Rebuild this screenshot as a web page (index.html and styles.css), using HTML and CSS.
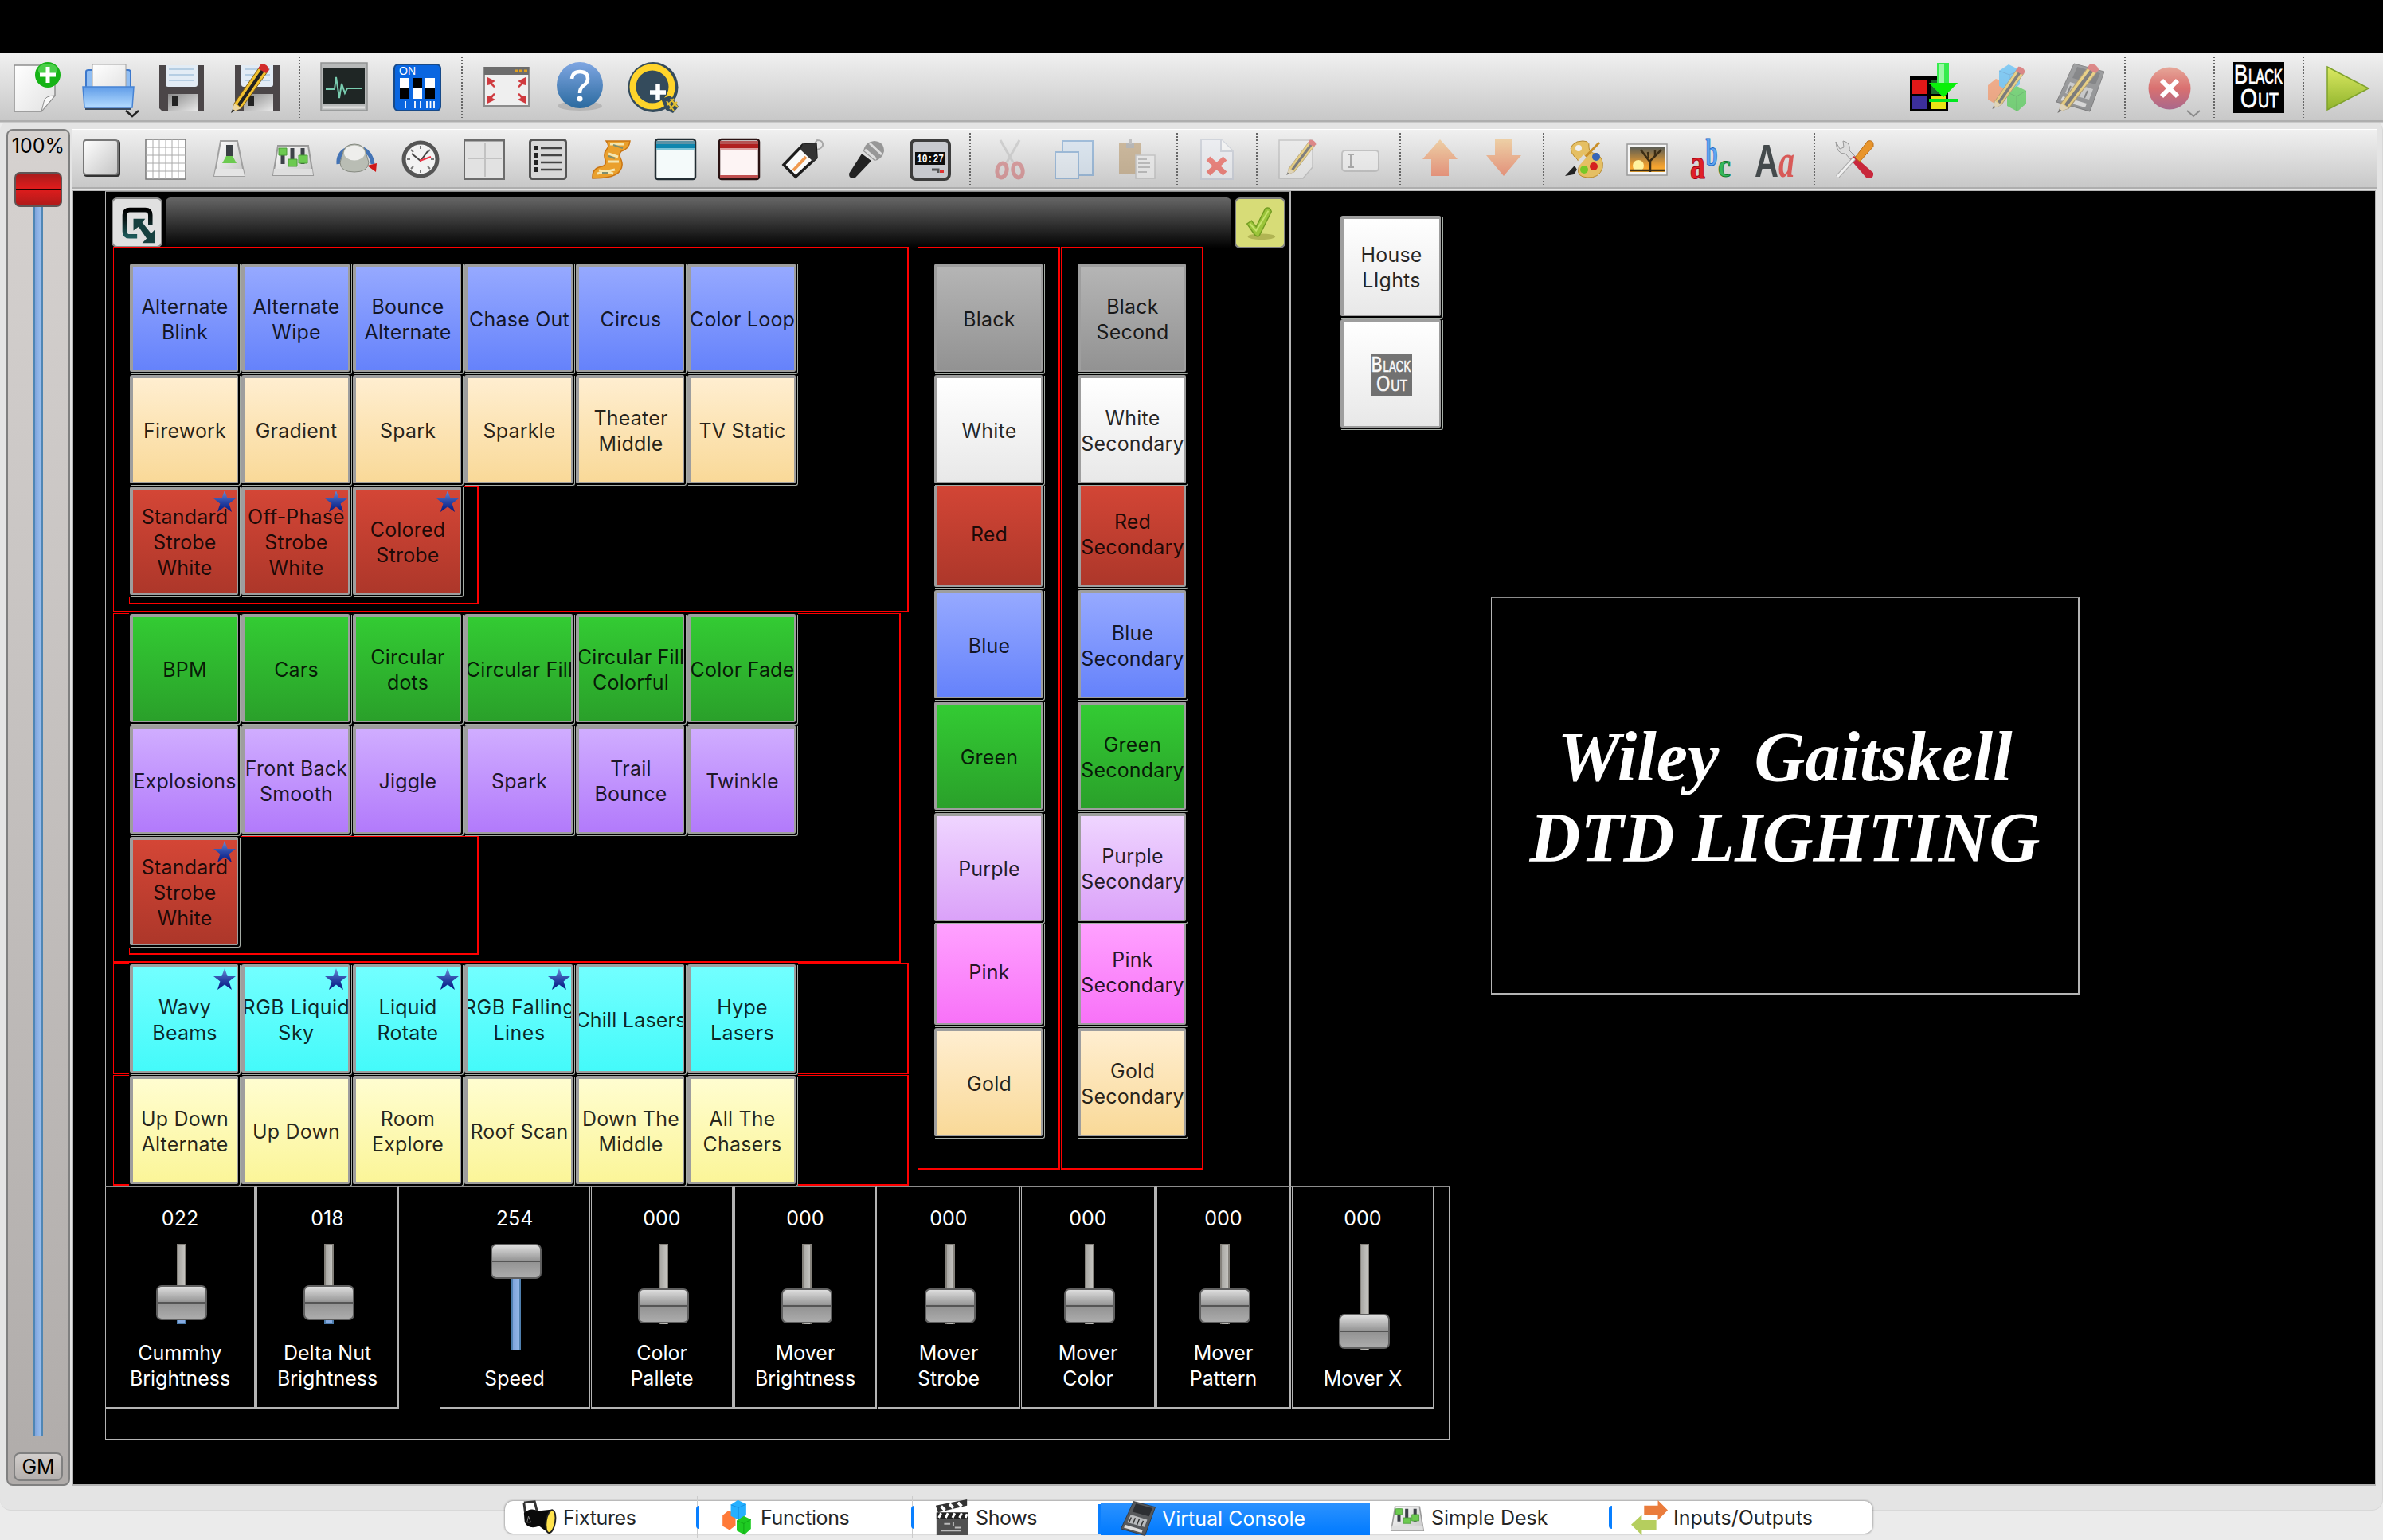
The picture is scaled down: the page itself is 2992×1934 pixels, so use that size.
FILE: index.html
```html
<!DOCTYPE html>
<html lang="en">
<head>
<meta charset="utf-8">
<title>Virtual Console</title>
<link rel="stylesheet" href="styles.css">
</head>
<body>
<svg class="defs" width="0" height="0" aria-hidden="true">
  <defs>
    <linearGradient id="gPaper" x1="0" y1="0" x2="1" y2="1"><stop offset="0" stop-color="#fff"/><stop offset="1" stop-color="#e2e2e2"/></linearGradient>
    <linearGradient id="gBlue" x1="0" y1="0" x2="0" y2="1"><stop offset="0" stop-color="#5f9ce8"/><stop offset="1" stop-color="#b5dcff"/></linearGradient>
    <linearGradient id="gHelp" x1="0" y1="0" x2="0" y2="1"><stop offset="0" stop-color="#7fa6e2"/><stop offset="1" stop-color="#2a6a9f"/></linearGradient>
    <linearGradient id="gMetal" x1="0" y1="0" x2="1" y2="1"><stop offset="0" stop-color="#8a8a8a"/><stop offset="1" stop-color="#e8e8e8"/></linearGradient>
    <linearGradient id="gPlate" x1="0" y1="0" x2="1" y2="1"><stop offset="0" stop-color="#fff"/><stop offset="1" stop-color="#c4c4c4"/></linearGradient>
    <linearGradient id="gPlay" x1="0" y1="0" x2="0" y2="1"><stop offset="0" stop-color="#dbe962"/><stop offset="1" stop-color="#8fb32c"/></linearGradient>
    <linearGradient id="gStop" x1="0" y1="0" x2="0" y2="1"><stop offset="0" stop-color="#e6a698"/><stop offset=".5" stop-color="#d97070"/><stop offset="1" stop-color="#a8688c"/></linearGradient>
    <linearGradient id="gArrow" x1="0" y1="0" x2="0" y2="1"><stop offset="0" stop-color="#edcfa5"/><stop offset="1" stop-color="#e2917a"/></linearGradient>
    <linearGradient id="gStar" x1="0" y1="0" x2="0" y2="1"><stop offset="0" stop-color="#6d8fd6"/><stop offset=".5" stop-color="#2c48a8"/><stop offset="1" stop-color="#001780"/></linearGradient>
    <linearGradient id="gSun" x1="0" y1="0" x2="0" y2="1"><stop offset="0" stop-color="#555a55"/><stop offset=".75" stop-color="#f0a030"/><stop offset="1" stop-color="#ffb030"/></linearGradient>
    <linearGradient id="gTeal" x1="0" y1="0" x2="0" y2="1"><stop offset="0" stop-color="#000"/><stop offset=".4" stop-color="#0a1a1a"/><stop offset="1" stop-color="#1e5a5a"/></linearGradient>
    <g id="pencil">
      <path d="M8 52 40 6 50 12 17 58 6 62Z" fill="#f2c12e" stroke="#806018" stroke-width="1"/>
      <path d="M12 53 43 8 47 10 15 56Z" fill="#222"/>
      <path d="M38 8 42 2Q50 2 52 10L48 14Z" fill="#d22b2b"/>
      <path d="M8 52 17 58 5 63Z" fill="#ecd6a0"/><path d="M6 59 9 61 4 64Z" fill="#222"/>
    </g>
    <g id="floppy">
      <path d="M4 4H60V62H8L4 58Z" fill="#4b4648"/>
      <path d="M12 4H52V28Q52 31 49 31H15Q12 31 12 28Z" fill="#e3ecf5"/>
      <path d="M16 9H48M16 16H48M16 23H48" stroke="#a8c3dd" stroke-width="1.6"/>
      <path d="M15 40H52V61H15Z" fill="url(#gMetal)"/><path d="M20 43H28V55H20Z" fill="#222"/>
    </g>
    <g id="cubes">
      <path d="M2 27 12 19 24 24V44L14 52 2 45Z" fill="#ff7a38"/>
      <path d="M16 9 28 1 42 8V26L30 35 16 28Z" fill="#25b0ff"/><path d="M16 9 29 14 42 8M29 14V34" stroke="#1585d6" fill="none"/>
      <path d="M26 36 38 28 50 34V50L39 60 26 53Z" fill="#1ecb22"/><path d="M26 36 38 41 50 34M38 41V59" stroke="#0c9a12" fill="none"/>
    </g>
    <g id="desk">
      <path d="M24 2 62 12 44 62 2 50Z" fill="#57595c" stroke="#2c2c2e"/>
      <path d="M28 6 57 14 51 28 22 20Z" fill="#2d2f33"/>
      <path d="M19 25 48 34 43 47 13 39Z" fill="#b9bbbd"/>
      <path d="M20 30 16 39M27 31 23 41M34 33 30 43M41 36 37 45" stroke="#333" stroke-width="2"/>
      <path d="M10 43 40 52 38 57 7 48Z" fill="#dcdcdc"/>
    </g>
    <g id="faders">
      <path d="M7 9H45L51 46H1Z" fill="url(#gPlate)" stroke="#9a9a9a" stroke-width="2"/>
      <path d="M2 38H50L51 46H1Z" fill="#dedede"/>
      <path d="M13 12V32M25 12V32M38 12V32" stroke="#3d4248" stroke-width="5"/>
      <path d="M8 12H18V21H8ZM20 26H31V35H20ZM33 21H44V31H33Z" fill="#6cca50" stroke="#4a9c38"/>
    </g>
    <symbol id="star" viewBox="0 0 28 28"><path d="M14 0 17.6 10H28L19.6 16.4 23 27 14 20.6 5 27 8.4 16.4 0 10H10.4Z" fill="url(#gStar)"/></symbol>
    <symbol id="blackout" viewBox="0 0 64 64">
      <path d="M0 0H64V64H0Z" fill="#000"/>
      <g fill="#fff" stroke="#fff" stroke-width=".8" font-family="Liberation Sans, sans-serif"><text x="1" y="27" font-size="34" textLength="17" lengthAdjust="spacingAndGlyphs">B</text><text x="19" y="27" font-size="25" textLength="43" lengthAdjust="spacingAndGlyphs">LACK</text>
      <text x="9" y="57" font-size="34" textLength="21" lengthAdjust="spacingAndGlyphs">O</text><text x="31" y="57" font-size="25" textLength="26" lengthAdjust="spacingAndGlyphs">UT</text></g>
    </symbol>
  </defs>
</svg>

<div class="app">
  <div class="menubar-strip"></div>

  <header class="toolbar toolbar-main">
    <span class="tool"><svg viewBox="0 0 64 64"><path d="M6 4H57V42L40 62H6Z" fill="url(#gPaper)" stroke="#8e8e8e" stroke-width="1.5"/><path d="M57 42Q44 42 43 50L40 62Z" fill="#f8f8f8" stroke="#8e8e8e"/><circle cx="48" cy="16" r="16" fill="#16b316"/><ellipse cx="48" cy="10" rx="12" ry="8" fill="#6ee06a" opacity=".6"/><path d="M48 6V26M38 16H58" stroke="#fff" stroke-width="5"/></svg></span>
    <span class="tool"><svg viewBox="0 0 64 64"><path d="M4 12Q4 10 7 10H57Q60 10 60 13V34H4Z" fill="#8fbdf2" stroke="#3c78cc" stroke-width="2"/><path d="M12 3H54V34H12Z" fill="url(#gPaper)" stroke="#a0a0a0"/><path d="M0 31H64L62 57H2Z" fill="url(#gBlue)" stroke="#4683d4" stroke-width="1.5"/><path d="M3 59H61" stroke="#3c4c60" stroke-width="2"/><path d="M54 61 62 68 70 61" stroke="#222" stroke-width="2.5" fill="none"/></svg></span>
    <span class="tool"><svg viewBox="0 0 64 64"><use href="#floppy"/></svg></span>
    <span class="tool"><svg viewBox="0 0 64 64"><use href="#floppy" x="3"/><use href="#pencil" x="-2"/></svg></span>
    <i class="sep"></i>
    <span class="tool"><svg viewBox="0 0 64 64"><path d="M3 1H61V61H3Z" fill="#b7b9b9" stroke="#929494" stroke-width="1.5"/><path d="M6 7H58V53H6Z" fill="#1f2625"/><path d="M9 34H20L22 19 26 45 29 27 33 39 36 33H55" stroke="#79cdb0" stroke-width="2" fill="none"/><path d="M6 57H58" stroke="#ddd" stroke-width="3"/></svg></span>
    <span class="tool"><svg viewBox="0 0 64 64"><rect x="3" y="3" width="58" height="58" rx="5" fill="#0a66e0" stroke="#184a88" stroke-width="2"/><text x="9" y="16" font-size="14" textLength="21" lengthAdjust="spacingAndGlyphs" fill="#fff" font-family="Liberation Sans, sans-serif">ON</text><path d="M10 20H22V32H10ZM42 20H54V32H42ZM26 33H38V46H26Z" fill="#fff"/><path d="M26 20H38V33H26ZM10 32H22V46H10ZM42 32H54V46H42Z" fill="#000"/><path d="M17 49V58M29 49V58M36 49V58M44 49V58M48.500 49V58M53 49V58" stroke="#fff" stroke-width="1.8"/></svg></span>
    <i class="sep"></i>
    <span class="tool"><svg viewBox="0 0 64 64"><path d="M4 7H60V55H4Z" fill="#efefef" stroke="#8c8c8c" stroke-width="2"/><path d="M4 6H60V16H4Z" fill="#6c6c6c"/><path d="M42 11H46M48 11H52M54 11H58" stroke="#e0a020" stroke-width="3"/><g fill="#cf3a3f"><path d="M8 19 18 24 14 26 18 31 16 32 12 28 8 29Z"/><path d="M56 19 46 24 50 26 46 31 48 32 52 28 56 29Z"/><path d="M8 52 18 47 14 45 18 40 16 39 12 43 8 42Z"/><path d="M56 52 46 47 50 45 46 40 48 39 52 43 56 42Z"/></g></svg></span>
    <span class="tool"><svg viewBox="0 0 64 64"><ellipse cx="32" cy="55" rx="28" ry="6" fill="#000" opacity=".12"/><circle cx="32" cy="29" r="29" fill="url(#gHelp)"/><path d="M22 21Q23 12 32 12 42 12 42 21 42 26 36 30 32 33 32 39" stroke="#fff" stroke-width="4.500" fill="none"/><circle cx="32" cy="46" r="3.500" fill="#fff"/></svg></span>
    <span class="tool"><svg viewBox="0 0 64 64"><circle cx="32" cy="31.500" r="31.500" fill="#344b5c"/><circle cx="31" cy="31" r="24.500" fill="none" stroke="#ffd42a" stroke-width="8"/><path d="M38 27V48M28 38H48" stroke="#fff" stroke-width="5.500"/><path d="M42 46 54 42 64 56 57 64 48 60Z" fill="#344b5c"/><path d="M50 54 58 46M53 59 62 50M49 49 58 61M54 46 63 57" stroke="#e0bd35" stroke-width="2"/></svg></span>

    <div class="toolbar-right">
      <span class="tool"><svg viewBox="0 0 64 64"><path d="M2 18H50V62H2Z" fill="#000"/><path d="M5 22H24V40H5Z" fill="#e01818"/><path d="M28 22H47V40H28Z" fill="#1f6a2c"/><path d="M5 43H24V59H5Z" fill="#3c2f9c"/><path d="M28 43H47V59H28Z" fill="#e8e415"/><path d="M36 1H51V26H62L44 44 26 26H36Z" fill="#35ec4d"/><path d="M38 3H45V26H38Z" fill="#9cf7a5"/><path d="M26 26H62L44 44Z" fill="#09f009"/><path d="M26 46H63V50H26Z" fill="#00e820"/></svg></span>
      <span class="tool off"><svg viewBox="0 0 64 64"><use href="#cubes" x="6" y="2"/><g transform="translate(10 4) scale(.86)"><use href="#pencil"/></g></svg></span>
      <span class="tool off"><svg viewBox="0 0 64 64"><use href="#desk"/><g transform="translate(-1 0) scale(1.08 1)"><use href="#pencil"/></g></svg></span>
      <i class="sep"></i>
      <span class="tool"><svg viewBox="0 0 64 64"><circle cx="32" cy="33" r="26.500" fill="url(#gStop)"/><path d="M22 23 42 43M42 23 22 43" stroke="#fff" stroke-width="6"/><path d="M54 61 62 68 70 61" stroke="#8a8a8a" stroke-width="2" fill="none"/></svg></span>
      <i class="sep"></i>
      <span class="tool"><svg><use href="#blackout"/></svg></span>
      <i class="sep"></i>
      <span class="tool"><svg viewBox="0 0 64 64"><path d="M6 6 58 33 6 60Z" fill="url(#gPlay)" stroke="#7fa22c" stroke-width="1.5"/></svg></span>
    </div>
  </header>

  <main class="pane">
    <aside class="grand-master">
      <span class="gm-value">100%</span>
      <div class="gm-track"><i class="gm-handle"></i></div>
      <span class="gm-button">GM</span>
    </aside>

    <section class="workspace">
      <nav class="toolbar toolbar-widgets">
        <span class="tool"><svg viewBox="0 0 52 52"><rect x="3" y="2" width="46" height="46" rx="4" fill="#333"/><rect x="3" y="2" width="43" height="43" rx="3" fill="url(#gPlate)" stroke="#777" stroke-width="2"/></svg></span>
        <span class="tool"><svg viewBox="0 0 52 52"><path d="M1 1H51V51H1Z" fill="#fff" stroke="#777" stroke-width="1.5"/><path d="M10 1V51M18 1V51M26 1V51M34 1V51M42 1V51M1 11H51M1 21H51M1 31H51M1 41H51" stroke="#aaa"/></svg></span>
        <span class="tool"><svg viewBox="0 0 52 52"><path d="M15 3H36L45 47H7Z" fill="url(#gPlate)" stroke="#a0a0a0" stroke-width="2"/><path d="M9 38H43L45 47H7Z" fill="#e4e4e4"/><path d="M26 8V28" stroke="#3a3f44" stroke-width="8"/><path d="M22 22H30L35 31H17Z" fill="#6cca50"/></svg></span>
        <span class="tool"><svg viewBox="0 0 52 52"><use href="#faders"/></svg></span>
        <span class="tool"><svg viewBox="0 0 52 52"><path d="M3 32Q2 20 12 14M34 13Q44 18 46 32" stroke="#4373b5" stroke-width="5" fill="none"/><path d="M39 34 51 31 50 42Z" fill="#d01818"/><path d="M8 20Q10 7 23 7 36 7 38 20L41 30Q40 42 23 42 5 42 5 30Z" fill="#b9bdb4" stroke="#858980"/><ellipse cx="23" cy="18" rx="13" ry="9.500" fill="#eeeeec"/></svg></span>
        <span class="tool"><svg viewBox="0 0 52 52"><circle cx="26" cy="26" r="21" fill="#f2f2f2" stroke="#555" stroke-width="5"/><path d="M26 9V13M26 39V43M9 26H13M39 26H43M14 14 17 17M38 14 35 17M14 38 17 35M38 38 35 35" stroke="#777" stroke-width="2"/><path d="M15 19 26 28 35 16" stroke="#444" stroke-width="2" fill="none"/><path d="M25 28 39 23" stroke="#e34" stroke-width="2"/></svg></span>
        <span class="tool"><svg viewBox="0 0 52 52"><path d="M1 1H51V51H1Z" fill="#e2e2e2" stroke="#6c6c6c" stroke-width="2"/><path d="M1 2H51" stroke="#6c6c6c" stroke-width="3"/><path d="M27 5V48M5 25H48" stroke="#c2c2c2" stroke-width="2"/></svg></span>
        <span class="tool"><svg viewBox="0 0 52 52"><rect x="3.500" y="1.500" width="45" height="49" rx="3" fill="#d8d8d8" stroke="#555" stroke-width="3"/><path d="M9 12H14M9 21H14M9 30H14M9 39H14" stroke="#222" stroke-width="6"/><path d="M17 12H43M17 21H43M17 30H43M17 39H43" stroke="#444" stroke-width="2.500"/></svg></span>
        <span class="tool"><svg viewBox="0 0 52 52"><path d="M19 3H49Q48 13 38 16 34 20 38 27 41 35 36 41 30 50 2 50 1 37 14 35 20 33 18 27 15 19 20 13 24 9 19 3Z" fill="#eaa02c" stroke="#c97412" stroke-width="1.500"/><path d="M24 7H42M22 19 34 23M22 29H35M8 44 30 39M10 40 28 44" stroke="#f4e6b0" stroke-width="3"/><path d="M28 8 40 12M22 22 30 25M14 43H22" stroke="#7c8f70" stroke-width="2"/></svg></span>
        <span class="tool"><svg viewBox="0 0 52 52"><rect x="1" y="1" width="50" height="50" rx="3" fill="#f4fafa" stroke="#222d33" stroke-width="2.500"/><path d="M2 3H50V8H2Z" fill="#5c93a6"/><path d="M2 7H50V12H2Z" fill="#0f86ae"/><path d="M2 12H50V14H2Z" fill="#7cc3d6"/></svg></span>
        <span class="tool"><svg viewBox="0 0 52 52"><rect x="1" y="1" width="50" height="50" rx="3" fill="#fdf4f4" stroke="#2a1212" stroke-width="2.500"/><path d="M2 3H50V8H2Z" fill="#b55454"/><path d="M2 7H50V12H2Z" fill="#b02020"/><path d="M2 12H50V15H2Z" fill="#dca0a0"/><path d="M2 46H50V50H2Z" fill="#c05050"/></svg></span>
        <span class="tool"><svg viewBox="0 0 52 52"><path d="M38 10 44 2Q52 2 51 9 48 14 42 14" fill="none" stroke="#aaa" stroke-width="2"/><path d="M26 8 42 7 43 24 17 48 2 33Z" fill="#fafafa" stroke="#1c1c1c" stroke-width="3.500"/><path d="M26 7 42 6 44 24 39 29 23 14Z" fill="#333"/><path d="M30 23 14 40" stroke="#f09a50" stroke-width="4"/></svg></span>
        <span class="tool"><svg viewBox="0 0 52 52"><path d="M20 19 32 28 12 49Q4 52 4 44Z" fill="#222"/><path d="M22 16Q24 4 36 3 48 4 48 16 46 26 36 28Z" fill="#979797"/><path d="M30 6 45 20M24 14 38 26" stroke="#ddd" stroke-width="3"/></svg></span>
        <span class="tool"><svg viewBox="0 0 52 52"><rect x="2" y="2" width="48" height="49" rx="6" fill="#c7c9ce" stroke="#3d3d3d" stroke-width="4"/><path d="M7 17H45V33H7Z" fill="#0c0c0c"/><text x="9" y="30" font-size="14" textLength="34" lengthAdjust="spacingAndGlyphs" font-weight="bold" fill="#fff" font-family="Liberation Mono, monospace">10:27</text><path d="M28 39H36V43" stroke="#555" stroke-width="3" fill="none"/><path d="M38 39H43V43H38Z" fill="#d33"/></svg></span>
        <i class="sep"></i>
        <span class="tool off"><svg viewBox="0 0 52 52"><path d="M14 2 30 30M38 2 22 30" stroke="#b8b8b8" stroke-width="3"/><ellipse cx="16" cy="40" rx="6" ry="9" transform="rotate(12 16 40)" fill="none" stroke="#cc5b5e" stroke-width="5"/><ellipse cx="36" cy="40" rx="6" ry="9" transform="rotate(-12 36 40)" fill="none" stroke="#cc5b5e" stroke-width="5"/></svg></span>
        <span class="tool off"><svg viewBox="0 0 52 52"><path d="M12 3H50V46H12Z" fill="#cfe2f5" stroke="#5a92cc" stroke-width="2"/><path d="M3 17H32V50H3Z" fill="#e0ecf8" stroke="#5a92cc" stroke-width="2"/></svg></span>
        <span class="tool off"><svg viewBox="0 0 52 52"><path d="M3 6H31V44H3Z" fill="#b08a55"/><path d="M12 5H22V12H12Z" fill="#888"/><path d="M17 1V7" stroke="#999" stroke-width="4"/><path d="M24 21H48V50H24Z" fill="#eee" stroke="#aaa" stroke-width="1.500"/><path d="M27 26H38M27 31H42M27 36H42M27 42H38" stroke="#999" stroke-width="2"/></svg></span>
        <i class="sep"></i>
        <span class="tool off"><svg viewBox="0 0 52 52"><path d="M6 1H31L46 16V51H6Z" fill="#f0f3fa" stroke="#b9c0cf" stroke-width="2"/><path d="M31 1V16H46" fill="#fff" stroke="#b9c0cf" stroke-width="2"/><path d="M15 25 36 44M36 25 15 44" stroke="#f22c20" stroke-width="7"/></svg></span>
        <i class="sep"></i>
        <span class="tool off"><svg viewBox="0 0 52 52"><path d="M4 2H46V36L34 50H4Z" fill="#eee" stroke="#a8a8a8" stroke-width="1.500"/><g transform="translate(10 0) scale(.78 .72)"><use href="#pencil"/></g></svg></span>
        <span class="tool off"><svg viewBox="0 0 52 52"><rect x="3" y="15" width="46" height="26" rx="4" fill="#f5f5f5" stroke="#a5a5a5" stroke-width="2"/><path d="M10 20H18M14 20V36M10 36H18" stroke="#777" stroke-width="2"/></svg></span>
        <i class="sep"></i>
        <span class="tool"><svg viewBox="0 0 52 52"><path d="M26 1 48 26H37V47H15V26H4Z" fill="url(#gArrow)"/></svg></span>
        <span class="tool"><svg viewBox="0 0 52 52"><path d="M26 47 48 21H37V1H15V21H4Z" fill="url(#gArrow)"/></svg></span>
        <i class="sep"></i>
        <span class="tool"><svg viewBox="0 0 52 52"><path d="M18 4Q35 0 33 11 33 18 42 19 52 24 50 37 46 50 31 49 17 48 20 37 23 29 15 23 4 11 18 4Z" fill="#e5bf63" stroke="#b78a30"/><circle cx="20" cy="12" r="4" fill="#eee"/><circle cx="42" cy="23" r="5" fill="#3765b8"/><circle cx="39" cy="35" r="5" fill="#d42020"/><circle cx="27" cy="39" r="5" fill="#76c828"/><path d="M46 5 17 35" stroke="#c98e28" stroke-width="3"/><path d="M28 22 14 38" stroke="#ddd" stroke-width="5"/><path d="M15 34 3 47 14 45 18 39Z" fill="#222"/></svg></span>
        <span class="tool"><svg viewBox="0 0 52 52"><path d="M1 7H51V46H1Z" fill="#f6f6f6" stroke="#999" stroke-width="1.500"/><path d="M4 10H48V42H4Z" fill="url(#gSun)"/><circle cx="15" cy="34" r="7" fill="#fff3a0"/><path d="M30 42V27M30 30 18 14M30 28 44 14M28 25 27 17M36 22V14M4 40H48" stroke="#3b2c14" stroke-width="2.500"/></svg></span>
        <span class="tool"><svg viewBox="0 0 52 52" font-family="Liberation Serif, serif" font-weight="bold"><text x="0" y="50" font-size="54" textLength="19" lengthAdjust="spacingAndGlyphs" fill="#e02028" stroke="#a00010">a</text><text x="19.500" y="34" font-size="48" textLength="15" lengthAdjust="spacingAndGlyphs" fill="#5ea5f0" stroke="#2068c8">b</text><text x="35" y="48" font-size="42" textLength="16" lengthAdjust="spacingAndGlyphs" fill="#35b85a" stroke="#107a30">c</text></svg></span>
        <span class="tool"><svg viewBox="0 0 52 52"><text x="31" y="48" font-size="60" textLength="20" lengthAdjust="spacingAndGlyphs" font-style="italic" font-weight="bold" fill="#d85a58" font-family="Liberation Serif, serif">a</text><text x="1" y="48" font-size="58" textLength="30" lengthAdjust="spacingAndGlyphs" font-weight="bold" fill="#444a4c" font-family="Liberation Sans, sans-serif">A</text></svg></span>
        <i class="sep"></i>
        <span class="tool"><svg viewBox="0 0 52 52"><path d="M3 4 8 13 13 11 12 3Q22 5 20 15L28 23 23 28 15 19Q4 20 3 4Z" fill="#ddd" stroke="#999"/><path d="M26 22 50 43Q51 52 41 49L21 26Z" fill="#c8283c"/><path d="M27 24 43 3Q51 1 50 10L33 29Z" fill="#e8952c" stroke="#b96d18"/><path d="M26 25 5 48" stroke="#aaa" stroke-width="5"/><path d="M26 25 5 48" stroke="#f0f0f0" stroke-width="3"/></svg></span>
      </nav>

      <div class="canvas">
        <div class="frame gray-frame main-frame"></div>

        <div class="q-button"><svg viewBox="0 0 48 52"><path d="M40 26V12Q40 5 33 5H12Q5 5 5 12V34Q5 41 12 41H22" fill="none" stroke="url(#gTeal)" stroke-width="6"/><path d="M17 17H33L29 22 41 37 46 32V50H29L35 44 24 28 17 33Z" fill="#16403f"/></svg></div>
        <div class="title-bar"></div>
        <div class="check-button"><svg viewBox="0 0 48 48"><ellipse cx="27" cy="41" rx="18" ry="4" fill="#6b6b10" opacity=".35"/><path d="M8 24 14 20 20 28 32 4Q38 1 40 8L24 40Q20 42 17 37Z" fill="#9bc53a" stroke="#729c22" stroke-width="1.500"/><path d="M12 24 20 33 36 7" stroke="#c5e26a" stroke-width="2" fill="none"/></svg></div>

        <div class="frame red-frame matrix-a">
          <div class="grid">
            <div class="btn blue"><span>Alternate<br>Blink</span></div><div class="btn blue"><span>Alternate<br>Wipe</span></div><div class="btn blue"><span>Bounce<br>Alternate</span></div><div class="btn blue"><span>Chase Out</span></div><div class="btn blue"><span>Circus</span></div><div class="btn blue"><span>Color Loop</span></div>
            <div class="btn gold"><span>Firework</span></div><div class="btn gold"><span>Gradient</span></div><div class="btn gold"><span>Spark</span></div><div class="btn gold"><span>Sparkle</span></div><div class="btn gold"><span>Theater<br>Middle</span></div><div class="btn gold"><span>TV Static</span></div>
          </div>
          <div class="frame red-frame strobes">
            <div class="btn red"><span>Standard<br>Strobe<br>White</span><svg class="star"><use href="#star"/></svg></div><div class="btn red"><span>Off-Phase<br>Strobe<br>White</span><svg class="star"><use href="#star"/></svg></div><div class="btn red"><span>Colored<br>Strobe</span><svg class="star"><use href="#star"/></svg></div>
          </div>
        </div>

        <div class="frame red-frame matrix-b">
          <div class="grid">
            <div class="btn green"><span>BPM</span></div><div class="btn green"><span>Cars</span></div><div class="btn green"><span>Circular<br>dots</span></div><div class="btn green"><span>Circular Fill</span></div><div class="btn green"><span>Circular Fill<br>Colorful</span></div><div class="btn green"><span>Color Fade</span></div>
            <div class="btn violet"><span>Explosions</span></div><div class="btn violet"><span>Front Back<br>Smooth</span></div><div class="btn violet"><span>Jiggle</span></div><div class="btn violet"><span>Spark</span></div><div class="btn violet"><span>Trail<br>Bounce</span></div><div class="btn violet"><span>Twinkle</span></div>
          </div>
          <div class="frame red-frame strobes">
            <div class="btn red"><span>Standard<br>Strobe<br>White</span><svg class="star"><use href="#star"/></svg></div>
          </div>
        </div>

        <div class="frame red-frame lasers">
          <div class="grid">
            <div class="btn cyan"><span>Wavy<br>Beams</span><svg class="star"><use href="#star"/></svg></div><div class="btn cyan tight"><span>RGB Liquid<br>Sky</span><svg class="star"><use href="#star"/></svg></div><div class="btn cyan"><span>Liquid<br>Rotate</span><svg class="star"><use href="#star"/></svg></div><div class="btn cyan tight"><span>RGB Falling<br>Lines</span><svg class="star"><use href="#star"/></svg></div><div class="btn cyan"><span>Chill Lasers</span></div><div class="btn cyan"><span>Hype<br>Lasers</span></div>
          </div>
        </div>

        <div class="frame red-frame movers">
          <div class="grid">
            <div class="btn yellow"><span>Up Down<br>Alternate</span></div><div class="btn yellow"><span>Up Down</span></div><div class="btn yellow"><span>Room<br>Explore</span></div><div class="btn yellow"><span>Roof Scan</span></div><div class="btn yellow"><span>Down The<br>Middle</span></div><div class="btn yellow"><span>All The<br>Chasers</span></div>
          </div>
        </div>

        <div class="frame red-frame colors primary">
          <div class="btn black"><span>Black</span></div><div class="btn white raised"><span>White</span></div><div class="btn red tucked"><span>Red</span></div><div class="btn blue"><span>Blue</span></div><div class="btn green"><span>Green</span></div><div class="btn lilac raised"><span>Purple</span></div><div class="btn pink tucked"><span>Pink</span></div><div class="btn gold"><span>Gold</span></div>
        </div>
        <div class="frame red-frame colors secondary">
          <div class="btn black"><span>Black<br>Second</span></div><div class="btn white raised"><span>White<br>Secondary</span></div><div class="btn red tucked"><span>Red<br>Secondary</span></div><div class="btn blue"><span>Blue<br>Secondary</span></div><div class="btn green"><span>Green<br>Secondary</span></div><div class="btn lilac raised"><span>Purple<br>Secondary</span></div><div class="btn pink tucked"><span>Pink<br>Secondary</span></div><div class="btn gold"><span>Gold<br>Secondary</span></div>
        </div>

        <div class="house">
          <div class="btn white house-lights"><span>House<br>LIghts</span></div>
          <div class="btn white"><span><svg class="blackout-icon"><use href="#blackout"/></svg></span></div>
        </div>

        <div class="frame gray-frame sliders">
          <div class="slider wide"><b>022</b><div class="track low"><i style="top:52px"></i></div><p>Cummhy<br>Brightness</p></div>
          <div class="slider"><b>018</b><div class="track low"><i style="top:52px"></i></div><p>Delta Nut<br>Brightness</p></div>
          <div class="slider wide apart"><b>254</b><div class="track fill"><i style="top:0"></i></div><p>Speed</p></div>
          <div class="slider"><b>000</b><div class="track"><i style="top:56px"></i></div><p>Color<br>Pallete</p></div>
          <div class="slider"><b>000</b><div class="track"><i style="top:56px"></i></div><p>Mover<br>Brightness</p></div>
          <div class="slider"><b>000</b><div class="track"><i style="top:56px"></i></div><p>Mover<br>Strobe</p></div>
          <div class="slider narrow"><b>000</b><div class="track"><i style="top:56px"></i></div><p>Mover<br>Color</p></div>
          <div class="slider narrow"><b>000</b><div class="track"><i style="top:56px"></i></div><p>Mover<br>Pattern</p></div>
          <div class="slider"><b>000</b><div class="track"><i style="top:88px"></i></div><p>Mover X</p></div>
        </div>

        <div class="frame gray-frame banner"><p>Wiley  Gaitskell
DTD LIGHTING</p></div>
      </div>
    </section>
  </main>

  <footer class="tabs">
    <div class="tab t1"><svg viewBox="0 0 48 48"><path d="M4 4 18 3 22 19M4 4 6 20" stroke="#333" stroke-width="3" fill="none"/><path d="M4 18Q12 10 22 15L42 13 36 44 24 35Q10 40 5 30Z" fill="#0a0a0a"/><path d="M10 22 13 30 8 30Z" stroke="#888" fill="none"/><ellipse cx="39" cy="29" rx="6" ry="15" transform="rotate(9 39 29)" fill="#ffe34d" stroke="#222" stroke-width="2"/></svg><span>Fixtures</span></div>
    <div class="tab t2 divided"><svg viewBox="0 0 52 62"><use href="#cubes"/></svg><span>Functions</span></div>
    <div class="tab t3 divided"><svg viewBox="0 0 48 48"><path d="M3 8 44 0V8L6 17Z" fill="#333"/><path d="M10 9 15 14M21 6 26 11M32 4 37 9" stroke="#fff" stroke-width="4"/><path d="M4 18H45V47H4Z" fill="#505050"/><path d="M4 17H45V25H4Z" fill="#222"/><path d="M10 18 7 24M19 18 16 24M28 18 25 24M37 18 34 24M44 19 42 24" stroke="#fff" stroke-width="3"/><path d="M14 32H22M26 30V35M10 41H36M28 37H36" stroke="#bbb" stroke-width="2"/></svg><span>Shows</span></div>
    <div class="tab t4 selected"><svg viewBox="0 0 64 64"><use href="#desk"/></svg><span>Virtual Console</span></div>
    <div class="tab t5"><svg viewBox="0 0 52 52"><use href="#faders"/></svg><span>Simple Desk</span></div>
    <div class="tab t6 divided"><svg viewBox="0 0 48 48"><path d="M17 8H35V1L48 14 35 27V20H17Z" fill="#ea7c3c"/><path d="M33 27H14V20L0 33 14 47V40H33Z" fill="#adc94c" opacity=".9"/></svg><span>Inputs/Outputs</span></div>
  </footer>
</div>
</body>
</html>
```
FILE: styles.css
```css
* { box-sizing: border-box; }
body {
  margin: 0;
  background: #ebebeb;
  font: 25px/32px Inter, "Liberation Sans", sans-serif;
  color: #000;
}
svg { display: block; overflow: visible; }
.defs { position: absolute; }
.app { display: flex; flex-direction: column; width: 2992px; height: 1934px; overflow: hidden; }
.menubar-strip { height: 66px; flex: none; background: #000; }

/* toolbars */
.toolbar {
  display: flex;
  flex: none;
  background: linear-gradient(#f0f0f0, #c8c8c8);
  border-top: 1px solid #fff;
  border-bottom: 2px solid #aeaeae;
}
.tool { display: flex; align-items: center; justify-content: center; flex: none; padding-top: 2px; }
.off { opacity: .5; }
.sep {
  width: 20px;
  flex: none;
  margin: 4px 0 3px;
  background: repeating-linear-gradient(#666 0 2px, transparent 2px 4px) 9px 0 / 2px 100% no-repeat;
}
.toolbar-main { height: 87px; box-shadow: 0 1px #c9c9c9; z-index: 1; }
.toolbar-main .tool { width: 92px; }
.toolbar > .tool:first-child { margin-left: -2px; }
.toolbar-main svg { width: 64px; height: 64px; }
.toolbar-right { display: flex; margin-left: auto; margin-right: -2px; }
.toolbar-widgets { height: 75px; }
.toolbar-widgets .tool { width: 80px; }
.toolbar-widgets svg { width: 52px; height: 52px; }

.pane {
  display: flex;
  flex: none;
  height: 1744px;
  padding: 9px 0 0 8px;
  background: #e4e4e4;
  border: 1px solid #d8d8d8;
  border-width: 0 1px 1px 0;
  border-radius: 10px 10px 14px 14px;
}
.grand-master {
  display: flex;
  flex: none;
  flex-direction: column;
  align-items: center;
  width: 80px;
  height: 1704px;
  margin-right: 2px;
  padding: 3px 0 4px;
  border: 2px solid #808080;
  border-radius: 8px;
  background: linear-gradient(#d6d2d0, #b0acaa);
}
.gm-track {
  position: relative;
  flex: 1;
  width: 12px;
  margin: 17px 0 20px;
  background: linear-gradient(90deg, #4f86b4 0 2px, #7fa4dd 2px, #9cc0ee 10px, #4f86b4 10px);
}
.gm-handle {
  position: absolute;
  left: -24px;
  top: 0;
  width: 60px;
  height: 44px;
  border: 2px solid #605656;
  border-radius: 7px;
  background: linear-gradient(transparent 19px, #200 19px 21px, transparent 21px), linear-gradient(#a81c1c, #de1c1c 45%, #d91c1c 55%, #b01a1a);
}
.gm-button {
  width: 62px;
  height: 36px;
  border: 2px solid #808080;
  border-radius: 8px;
  background: linear-gradient(#d2cecc, #b4b0ae);
  text-align: center;
}

.workspace { display: flex; flex-direction: column; flex: none; width: 2894px; }
.canvas {
  position: relative;
  width: 2892px;
  height: 1627px;
  margin: 2px 0 0 1px;
  border: solid #b4b4b4;
  border-width: 1px 1px 2px;
  background: #000;
}

/* console frames: placed freely on the console canvas */
.frame { border: solid; border-width: 1px 2px 2px 1px; }
.red-frame { border-color: #f00; }
.gray-frame { border-color: #b4b4b4; border-top-color: #8c8c8c; }
.canvas > .frame, .canvas > .house, .q-button, .title-bar, .check-button { position: absolute; }
.main-frame { left: 40px; top: 0; width: 1489px; height: 1251px; }
.q-button {
  left: 48px; top: 8px; width: 64px; height: 63px;
  padding: 9px 4px 0 9px;
  border: 2px solid #8c8c8c; border-radius: 7px;
  background: #e0e0e0;
}
.q-button svg { width: 46px; height: 48px; }
.title-bar { left: 116px; top: 8px; width: 1338px; height: 64px; border-radius: 6px; background: linear-gradient(#666, #000); }
.check-button {
  left: 1458px; top: 8px; width: 64px; height: 64px;
  padding: 8px 6px;
  border: 2px solid #808080; border-radius: 7px;
  background: #d7dc77;
}
.check-button svg { width: 46px; height: 46px; }

.matrix-a { left: 50px; top: 70px; width: 999px; height: 459px; padding: 19px; }
.matrix-b { left: 50px; top: 530px; width: 989px; height: 439px; padding: 0 19px; }
.lasers { left: 50px; top: 970px; width: 999px; height: 139px; padding: 0 19px; }
.movers { left: 50px; top: 1110px; width: 999px; height: 139px; padding: 0 19px; }
.grid { display: grid; grid-template-columns: repeat(6, 140px); }
.matrix-b .grid, .lasers .grid, .movers .grid { margin-top: -1px; }
.strobes { display: flex; width: 439px; height: 149px; }
.strobes .btn { margin-top: -1px; }
.strobes .btn:first-child { margin-left: -1px; }
.colors { display: flex; flex-direction: column; top: 70px; width: 179px; height: 1159px; padding: 19px; }
.primary { left: 1060px; }
.secondary { left: 1240px; }
.house { left: 1590px; top: 30px; width: 130px; }

/* console button with its bevelled face */
.btn {
  position: relative;
  flex: none;
  width: 140px;
  height: 140px;
  padding: 1px 3px 3px 1px;
  background: #000;
}
.house .btn { width: 130px; }
.house .house-lights { height: 130px; }
.btn::after {
  content: "";
  position: absolute;
  inset: 2px 0 0 2px;
  border: solid #a5aca5;
  border-width: 0 1px 1px 0;
  border-radius: 0 0 3px;
}
.btn > span {
  display: flex;
  align-items: center;
  justify-content: center;
  height: 100%;
  overflow: hidden;
  border: solid #9e9e9e;
  border-width: 4px 2px 2px 4px;
  border-radius: 3px 2px 2px;
  background: linear-gradient(var(--a), var(--b)) padding-box, #9e9e9e;
  color: rgba(0, 0, 0, .85);
  text-align: center;
  white-space: nowrap;
  letter-spacing: .2px;
  padding-top: 1px;
}
.btn.tight > span { letter-spacing: .5px; }
.raised { z-index: 1; }
.tucked { margin-top: -10px; }
.blue { --a: #96a9ff; --b: #6582fb; }
.gold { --a: #ffeed0; --b: #f9d998; }
.red { --a: #d44636; --b: #ad372a; }
.green { --a: #33cb33; --b: #2aa02a; }
.violet { --a: #d0adff; --b: #b27afb; }
.cyan { --a: #72ffff; --b: #44fafa; }
.yellow { --a: #fffdd0; --b: #fbf598; }
.black { --a: #b5b5b5; --b: #929292; }
.white { --a: #ffffff; --b: #e8e8e8; }
.lilac { --a: #efd5ff; --b: #dba2f9; }
.pink { --a: #ffa3ff; --b: #f872f8; }
.star { position: absolute; right: 6px; top: 6px; width: 28px; height: 28px; }
.blackout-icon { width: 52px; height: 52px; opacity: .53; }

/* sliders */
.sliders { display: flex; align-items: flex-start; left: 40px; top: 1250px; width: 1689px; height: 319px; }
.slider {
  display: flex;
  flex-direction: column;
  flex: none;
  align-items: center;
  width: 179px;
  height: 279px;
  margin: -1px 1px 0 0;
  padding: 23px 0 20px;
  border: solid #b4b4b4;
  border-width: 1px 2px 2px 1px;
  border-top-color: #8c8c8c;
  color: #fff;
}
.slider:first-child { margin-left: -1px; }
.wide { width: 189px; }
.narrow { width: 169px; }
.apart { margin-left: 50px; }
.slider b { font-weight: 400; }
.slider p { margin: 20px 0 0; text-align: center; }
.track {
  position: relative;
  left: 2px;
  flex: 1;
  width: 12px;
  margin-top: 16px;
  border-top: 2px solid #85827c;
  background: linear-gradient(90deg, #85827c 0 2px, #a9a8a4 2px, #c4c3bf 10px, #85827c 10px);
}
.fill { background: linear-gradient(90deg, #4f7fae 0 2px, #7fa4dd 2px, #92b6e6 10px, #4f7fae 10px); }
.low {
  background: linear-gradient(#4f7fae, #4f7fae) 0 100% / 12px 2px no-repeat,
    linear-gradient(#86aae0, #86aae0) 2px 100% / 8px 5px no-repeat,
    linear-gradient(#4f7fae, #4f7fae) 0 100% / 12px 5px no-repeat,
    linear-gradient(90deg, #85827c 0 2px, #a9a8a4 2px, #c4c3bf 10px, #85827c 10px);
}
.track i {
  position: absolute;
  left: -26px;
  width: 64px;
  height: 44px;
  margin-top: -2px;
  border: 2px solid #5f5f5f;
  border-radius: 7px;
  background: linear-gradient(#dedede, #959595 19px, #555 19px 21px, #939393 21px, #acacac);
}

.banner {
  display: flex;
  align-items: center;
  justify-content: center;
  left: 1780px;
  top: 510px;
  width: 739px;
  height: 499px;
}
.banner p {
  margin: 4px 0 0;
  color: #fff;
  font: italic bold 88.4px/101px "Liberation Serif", serif;
  text-align: center;
  white-space: pre;
}

/* mode tabs */
.tabs {
  display: grid;
  grid-template-columns: 242px 270px 236px 338px 302px 329px;
  width: 1717px;
  height: 41px;
  margin: -12px 0 0 634px;
  border-radius: 10px;
  background: #fff;
  box-shadow: 0 0 2px 1px rgba(0, 0, 0, .25);
  z-index: 1;
}
.tab { position: relative; display: flex; align-items: center; gap: 6px; height: 41px; padding: 0 0 0 25px; color: #262626; white-space: nowrap; }
.tab svg { width: 48px; height: 46px; flex: none; }
.tab span { letter-spacing: -.4px; padding-top: 1px; }
.t1 { padding-left: 19px; }
.t4, .t5 { padding-left: 23px; }
.t4 span, .t5 span, .t6 span { letter-spacing: 0; }
.t5 svg { height: 42px; }
.selected { height: 40px; margin-top: 3px; padding-bottom: 3px; background: linear-gradient(#2b92ff, #007aff); color: #fff; box-shadow: -4px 0 0 -1px #0a7fff; }
.divided::before {
  content: "";
  position: absolute;
  left: -1px;
  top: -6px;
  width: 1px;
  height: 53px;
  background: #ccc;
}
.divided::after {
  content: "";
  position: absolute;
  left: -2px;
  top: 6px;
  width: 4px;
  height: 29px;
  border-radius: 4px 0 0 4px;
  background: #087fff;
}
```
